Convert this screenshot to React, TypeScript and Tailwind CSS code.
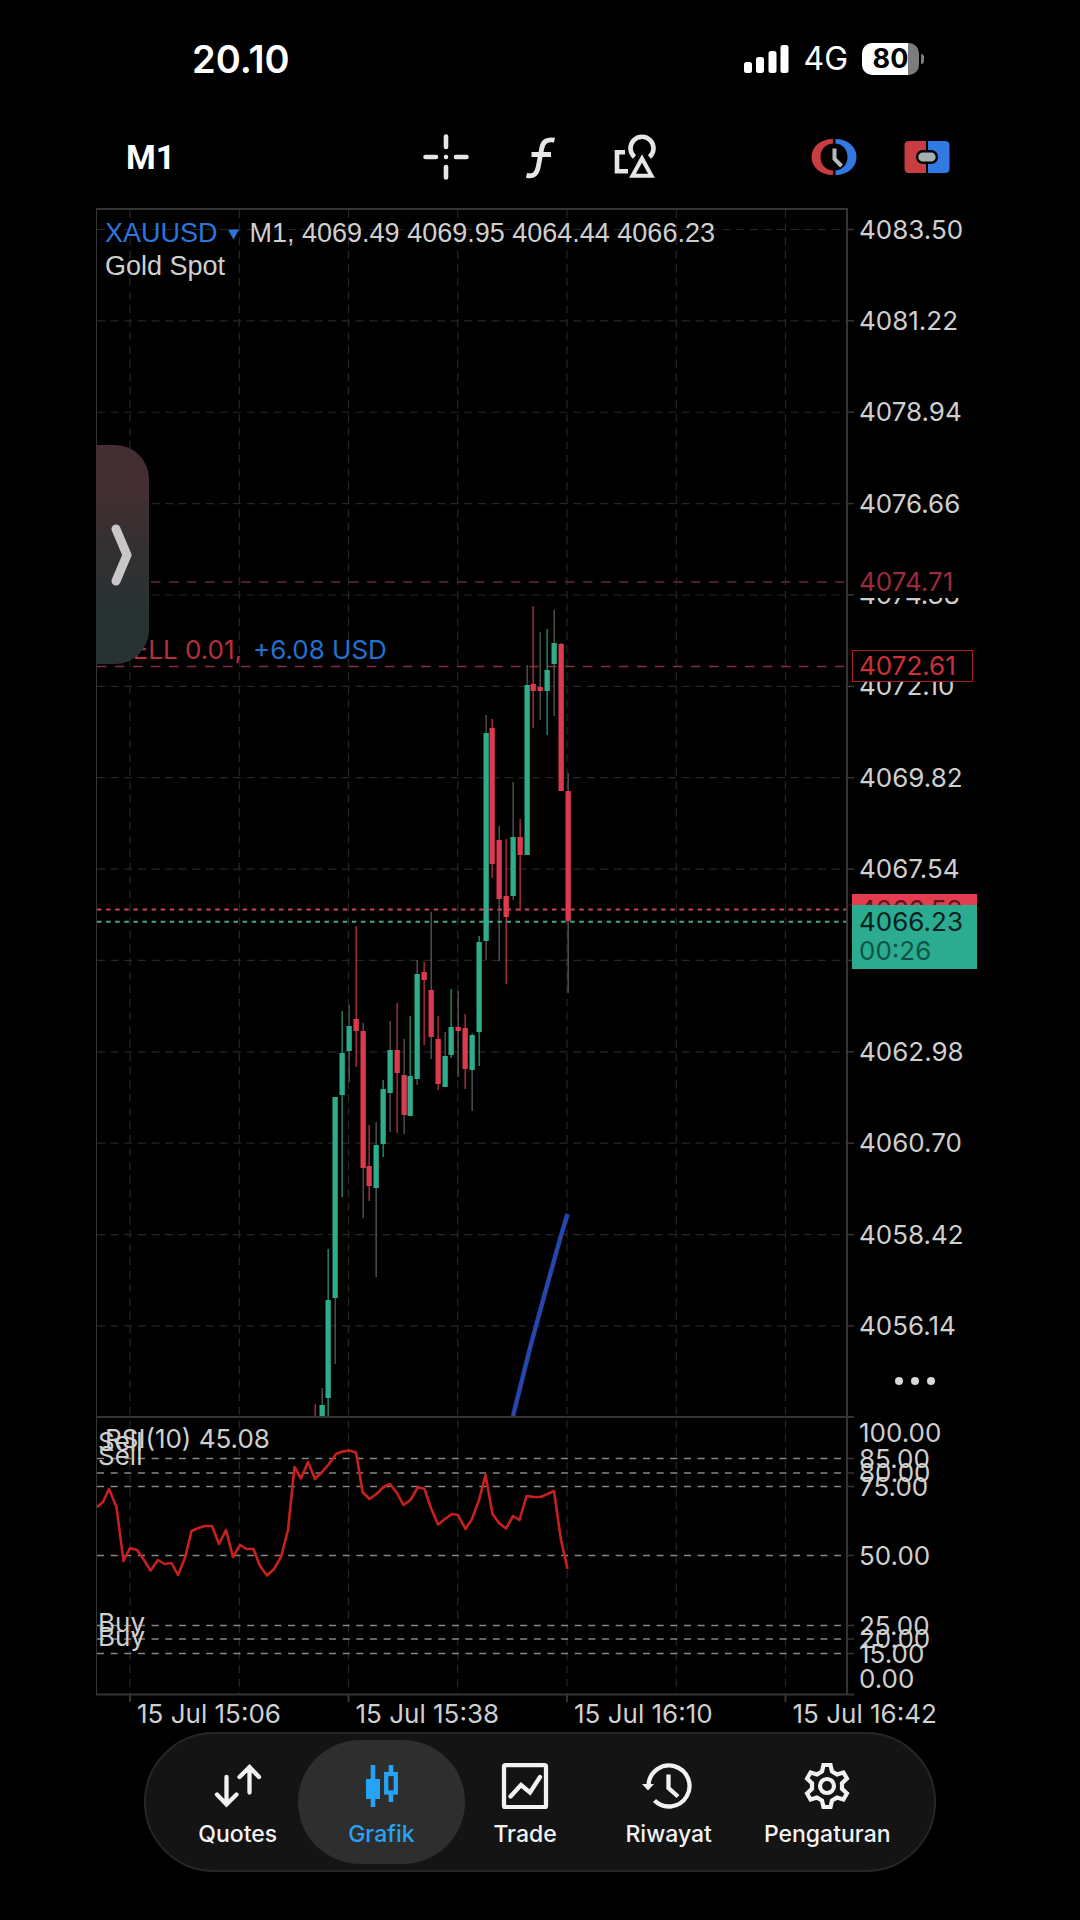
import React from 'react';
import clsx from 'clsx';

const BAR_STEP = 6.83;
const LAST_BAR_X = 567.5;

const GREEN = '#2ead8c';
const RED = '#de3a4e';

const priceLevels = [
  '4083.50', '4081.22', '4078.94', '4076.66', '4074.38', '4072.10', '4069.82',
  '4067.54', '4065.26', '4062.98', '4060.70', '4058.42', '4056.14',
].map((label, i) => ({ label, y: 229.5 + i * 91.37 }));

const verticalLines = [130, 239.3, 348.5, 457.7, 567, 676.3, 785.5];

const timeLabels = [
  { label: '15 Jul 15:06', x: 130 },
  { label: '15 Jul 15:38', x: 348.5 },
  { label: '15 Jul 16:10', x: 567 },
  { label: '15 Jul 16:42', x: 785.5 },
];

const rsiLevels = [
  { label: '85.00', y: 1458.5 },
  { label: '80.00', y: 1473 },
  { label: '75.00', y: 1486.5 },
  { label: '50.00', y: 1555.5 },
  { label: '25.00', y: 1625.5 },
  { label: '20.00', y: 1639 },
  { label: '15.00', y: 1653.5 },
];

// [high, body top, body bottom, low, up], oldest bar first
const candles: [number, number, number, number, boolean][] = [
  [1404, 1417, 1417, 1417, false],
  [1388, 1405, 1417, 1417, true],
  [1249, 1300, 1398, 1417, true],
  [1097, 1097, 1298, 1364, true],
  [1011, 1053, 1095, 1197, true],
  [1005, 1026, 1051, 1082, true],
  [926, 1019, 1031, 1067, false],
  [1023, 1031, 1168, 1218, false],
  [1125, 1166, 1186, 1201, false],
  [1122, 1145, 1188, 1277, true],
  [1080, 1089, 1144, 1157, true],
  [1021, 1050, 1093, 1132, true],
  [1003, 1050, 1073, 1133, false],
  [1039, 1075, 1115, 1134, false],
  [1016, 1076, 1116, 1116, true],
  [960, 974, 1079, 1085, true],
  [962, 972, 980, 1045, false],
  [912, 990, 1037, 1059, false],
  [1016, 1039, 1084, 1090, false],
  [1032, 1056, 1087, 1087, true],
  [989, 1027, 1055, 1058, true],
  [991, 1027, 1031, 1077, false],
  [1014, 1028, 1069, 1089, false],
  [1033, 1035, 1070, 1111, true],
  [936, 942, 1032, 1066, true],
  [715, 733, 941, 960, true],
  [719, 728, 864, 878, false],
  [826, 840, 899, 961, false],
  [839, 896, 917, 984, false],
  [782, 837, 896, 900, true],
  [819, 837, 855, 911, false],
  [665, 685, 855, 855, true],
  [606, 684, 691, 728, false],
  [632, 687, 691, 720, false],
  [629, 670, 691, 735, true],
  [610, 643, 664, 716, true],
  [643, 644, 791, 791, false],
  [773, 791, 921, 993, false],
];

const rsiLine =
  '97,1507 103,1502 109,1489 116.5,1507 123.5,1561 130,1548 137,1550 144,1560 150.5,1570.5 158,1560 164.5,1564 171.5,1563 178,1575 185,1558 191.5,1531 198.5,1528 205,1526 212,1526 219,1544 226,1530 233,1557 240,1545 246.5,1549 253.5,1549 260,1566 267,1575.5 274,1569 281,1557 288,1530 294.5,1467 301,1478.5 308,1462 315,1479 322,1472 329,1464 336,1454 342.5,1451.5 349.5,1450.5 356,1452.5 359,1470 362.5,1492 369.5,1499 376.5,1494 383.5,1487 390,1484 397,1493 403.5,1505 410.5,1500 418,1487 424.5,1489 431,1508 438,1524.5 445,1519 452,1514 458,1515 465.5,1529 472,1519 479,1500 485.5,1475 492.5,1514 499,1523 506,1528.5 513,1516 519.5,1520 526.5,1496 533.5,1497 540.5,1497 547.5,1494 554,1491 561,1540 567.5,1569';

const Chart: React.FC = () => (
  <svg
    viewBox="96 208 888 1524"
    className="block h-auto w-full font-['Inter',sans-serif] text-[26px]"
    role="img"
    aria-label="XAUUSD M1"
  >
    {/* grid */}
    <g stroke="#262626" strokeWidth="1.2" strokeDasharray="8 5.6">
      {verticalLines.map((x) => (
        <path key={x} d={`M${x} 210V1694`} />
      ))}
      {priceLevels.map(({ y }) => (
        <path key={y} d={`M97 ${y}H846`} />
      ))}
    </g>

    {/* order and stop levels */}
    <g stroke="#82303b" strokeWidth="1.3" strokeDasharray="9.5 8.5">
      <path d="M97 582H846" stroke="#65282f" />
      <path d="M97 666.5H846" />
    </g>
    <text x="242" y="659" textAnchor="end" fill="#b5303d">SELL 0.01,</text>
    <text x="253" y="659" fill="#2272d0">+6.08 USD</text>

    {/* candles */}
    {candles.map(([high, top, bottom, low, up], i) => {
      const fromLast = candles.length - 1 - i;
      const x = Math.round(LAST_BAR_X - fromLast * BAR_STEP);
      const color = up ? GREEN : RED;
      return (
        <g key={i}>
          <rect
            x={x - 0.5}
            y={high}
            width="1.3"
            height={low - high}
            fill={fromLast % 2 === 0 ? '#6b6969' : color}
            opacity="0.85"
          />
          <rect x={x - 2.5} y={top} width="5.3" height={bottom - top} fill={color} />
        </g>
      );
    })}

    {/* bid and ask */}
    <g strokeWidth="2" strokeDasharray="4.5 4.6">
      <path d="M97 909.5H846" stroke="#c8455a" />
      <path d="M97 921.8H846" stroke="#45a88c" />
    </g>

    {/* moving average */}
    <g fill="none">
      <path d="M513 1416 530 1348 545 1293 560 1239 567.5 1214" stroke="#1d48b4" strokeWidth="4.5" />
      <path
        d="M513 1416 530 1348 545 1293 560 1239 567.5 1214"
        stroke="#6b3578"
        strokeWidth="1.2"
        strokeDasharray="6 8"
      />
    </g>

    {/* RSI */}
    <g stroke="#868686" strokeWidth="1.3" strokeDasharray="7 6.65">
      {rsiLevels.map(({ y }) => (
        <path key={y} d={`M97 ${y}H841`} />
      ))}
    </g>
    <polyline points={rsiLine} fill="none" stroke="#c8201c" strokeWidth="2.6" strokeLinejoin="round" />
    <g fill="#cfcfcf">
      <text x="105" y="1448">RSI(10) 45.08</text>
      <text x="98" y="1451">Sell</text>
      <text x="98" y="1465">Sell</text>
      <text x="98" y="1632">Buy</text>
      <text x="98" y="1646">Buy</text>
    </g>

    {/* frame */}
    <g stroke="#343434" strokeWidth="2">
      <path d="M96.5 209V1694" strokeWidth="1" />
      <path d="M96 209H848" />
      <path d="M847 209V1695" />
      <path d="M96 1417H854" />
      <path d="M96 1694.5H854" />
      {priceLevels.map(({ y }) => (
        <path key={y} d={`M848 ${y}H854`} strokeWidth="1.5" />
      ))}
      {rsiLevels.map(({ y }) => (
        <path key={y} d={`M848 ${y}H854`} strokeWidth="1.5" />
      ))}
      {timeLabels.map(({ x }) => (
        <path key={x} d={`M${x} 1695V1702`} />
      ))}
    </g>

    {/* scales */}
    <g fill="#cfcfcf">
      {priceLevels.map(({ label, y }) => (
        <text key={label} x="859" y={y + 9}>{label}</text>
      ))}
      <text x="859" y="1442">100.00</text>
      {rsiLevels.map(({ label, y }) => (
        <text key={label} x="859" y={y + 9}>{label}</text>
      ))}
      <text x="859" y="1688">0.00</text>
      {timeLabels.map(({ label, x }) => (
        <text key={label} x={x + 7} y="1723">{label}</text>
      ))}
    </g>

    {/* price tags */}
    <rect x="855" y="566" width="122" height="32" fill="#000" />
    <text x="859" y="591" fill="#9c2a3c">4074.71</text>
    <rect x="852.5" y="650.5" width="120" height="31" fill="#000" stroke="#a3202a" />
    <text x="859" y="675" fill="#cf3038">4072.61</text>
    <rect x="852" y="894" width="125" height="30" fill="#e53d50" />
    <text x="859" y="919" fill="#5a1620">4066.53</text>
    <rect x="852" y="905" width="125" height="64" fill="#2bab8f" />
    <text x="859" y="931" fill="#06221c">4066.23</text>
    <text x="859" y="960" fill="#0c5546">00:26</text>
  </svg>
);

const StatusBar: React.FC = () => (
  <div className="flex h-[82px] items-center justify-between pt-9 pr-[156px] pl-[192px]">
    <span className="text-[38px] font-semibold">20.10</span>
    <div className="flex items-center gap-[14px]">
      <svg width="45" height="28" viewBox="0 0 45 28" fill="#fff">
        <rect x="0" y="17" width="8" height="11" rx="2.5" />
        <rect x="12" y="12" width="8" height="16" rx="2.5" />
        <rect x="24.5" y="6" width="8" height="22" rx="2.5" />
        <rect x="36.5" y="0" width="8" height="28" rx="2.5" />
      </svg>
      <span className="text-[32px]">4G</span>
      <div className="flex items-center gap-[2px]">
        <div className="flex h-8 w-[57px] items-center justify-center rounded-[10px] bg-[linear-gradient(90deg,#fff_0_46px,#7c7c7c_46px)] text-[27px] font-bold text-black">
          80
        </div>
        <div className="h-[10px] w-[3px] rounded-r-full bg-[#7c7c7c]" />
      </div>
    </div>
  </div>
);

const Toolbar: React.FC = () => (
  <div className="flex h-[126px] items-center pt-6 pr-[130px] pl-[126px]">
    <div className="flex-1">
      <button className="font-['Roboto',sans-serif] text-[34px] font-bold">M1</button>
    </div>
    <div className="flex gap-12">
      <button aria-label="Crosshair">
        <svg width="46" height="46" viewBox="0 0 46 46" stroke="#e6e6e6" strokeWidth="4.6" strokeLinecap="round">
          <path d="M23 2.5V13M23 33V43.5M2.5 23H13M33 23H43.5M23 23h.01" />
        </svg>
      </button>
      <button aria-label="Indicators">
        <svg width="46" height="46" viewBox="0 0 46 46" fill="none" stroke="#e6e6e6" strokeWidth="4.8">
          <path d="M37.5 6.2C30 4.8 26 7.500 24.800 14L21.300 32.500C19.800 40 16.500 43 9.500 41.300M14.500 20.500H34" />
        </svg>
      </button>
      <button aria-label="Objects">
        <svg width="46" height="46" viewBox="0 0 46 46" fill="none" stroke="#e6e6e6" strokeWidth="4.6">
          <path d="M14 18.3H6V37.3H17" />
          <path d="M23.500 23A11.500 11.500 0 1 1 38.500 23" />
          <path d="M31 24.500 21.500 41.700H40.500Z" strokeWidth="4" />
        </svg>
      </button>
    </div>
    <div className="ml-[154px] flex gap-[47px]">
      <button aria-label="Trading sessions">
        <svg width="46" height="46" viewBox="0 0 46 46" fill="none">
          <path d="M22 5C9 5 .5 13 .5 23S9 41 22 41V36.5C14 36 9.500 30 9.500 23S14 10 22 9.500Z" fill="#c83d42" />
          <path d="M24.500 5C37 5 45.500 13 45.500 23S37 41 24.500 41V36.500C32 36 36.500 30 36.500 23S32 10 24.500 9.500Z" fill="#3279e4" />
          <path d="M23.500 14.500V25L30.500 32" stroke="#b9b9bd" strokeWidth="4" />
        </svg>
      </button>
      <button aria-label="One click trading">
        <svg width="46" height="46" viewBox="0 0 46 46">
          <path d="M5 7H22V39H5Q.5 39 .5 34.500V11.500Q.5 7 5 7Z" fill="#c83d42" />
          <path d="M24 7H41Q45.500 7 45.500 11.500V34.500Q45.500 39 41 39H24Z" fill="#3279e4" />
          <rect x="13.200" y="17.200" width="19.600" height="11.600" rx="5.500" fill="#a3b1b2" stroke="#000" strokeWidth="2.400" />
        </svg>
      </button>
    </div>
  </div>
);

const tabs = [
  {
    label: 'Quotes',
    icon: (
      <path d="M15.500 14V40M6 31.500 15.500 41.500 25.500 31.500M38.500 29.500V4M28.500 14 38.500 4 48 14" strokeLinecap="round" />
    ),
  },
  {
    label: 'Grafik',
    icon: (
      <>
        <path d="M19 2V44" strokeWidth="4.6" />
        <rect x="12" y="16" width="14" height="20" fill="currentColor" stroke="none" />
        <path d="M37 2V10M37 31V39" strokeWidth="4.6" />
        <rect x="32.2" y="11" width="9.6" height="18.5" />
      </>
    ),
  },
  {
    label: 'Trade',
    icon: (
      <>
        <rect x="6" y="2.2" width="42" height="42" rx="1.5" />
        <path d="M12.500 33.500 23 22 32 29.500 42 14" strokeLinecap="round" />
      </>
    ),
  },
  {
    label: 'Riwayat',
    icon: (
      <>
        <path d="M6.500 22A20.500 20.500 0 1 1 12.500 37.500" />
        <path d="M0 21H12L6 27.500Z" fill="currentColor" stroke="none" />
        <path d="M26.500 11.500V25L36 33.500" />
      </>
    ),
  },
  {
    label: 'Pengaturan',
    icon: (
      <g transform="translate(27 23)" strokeWidth="4.2">
        <path d="M-3.500-21H3.500L5-14.500 10-11.600 16.400-13.500 19.900-7.500 15-2.900V2.900L19.900 7.500 16.400 13.500 10 11.600 5 14.500 3.500 21H-3.500L-5 14.500-10 11.600-16.400 13.500-19.900 7.500-15 2.900V-2.900L-19.900-7.500-16.400-13.500-10-11.600-5-14.500Z" />
        <circle r="7" />
      </g>
    ),
  },
];

const TabBar: React.FC = () => (
  <nav className="mx-[144px] grid grid-cols-[144fr_144fr_144fr_144fr_174fr] rounded-full border-2 border-[#262626] bg-[#141414] py-[6px] pr-[20px] pl-[20px]">
    {tabs.map(({ label, icon }) => (
      <button
        key={label}
        className={clsx(
          'flex flex-col items-center gap-[11px] rounded-full pt-[23px] pb-4',
          label === 'Grafik' ? '-mx-3 bg-[#2e2e2e] text-[#27a3f5]' : 'text-[#f2f2f2]'
        )}
      >
        <svg width="54" height="46" viewBox="0 0 54 46" fill="none" stroke="currentColor" strokeWidth="4.3">
          {icon}
        </svg>
        <span className="text-[23px] leading-7 font-medium">{label}</span>
      </button>
    ))}
  </nav>
);

const App: React.FC = () => (
  <div className="min-h-screen bg-black font-['Inter',sans-serif] text-white">
    <StatusBar />
    <Toolbar />
    <main className="relative mx-[96px]">
      <Chart />
      <div className="absolute top-[9px] left-[9px] font-['Liberation_Sans',Arial,sans-serif] text-[27px] leading-[33px] text-[#cfcfcf]">
        <div className="flex items-center">
          <button className="flex items-center gap-[10px] text-[#2b76dc]">
            XAUUSD
            <svg width="11" height="12" viewBox="0 0 12 12" fill="currentColor">
              <path d="M0 1H12L6 12Z" />
            </svg>
          </button>
          <span className="ml-[11px]">M1, 4069.49 4069.95 4064.44 4066.23</span>
        </div>
        <div>Gold Spot</div>
      </div>
      <button
        aria-label="Open panel"
        className="absolute top-[237px] left-0 flex h-[219px] w-[53px] items-center justify-center rounded-r-[34px] bg-linear-to-b from-[#432f31] from-20% via-[#323031] via-50% to-[#293233] to-75%"
      >
        <svg width="24" height="64" viewBox="0 0 24 64" fill="none" stroke="#c9c6c9" strokeWidth="9" strokeLinecap="round" strokeLinejoin="round">
          <path d="M5 6 16 32 5 58" />
        </svg>
      </button>
      <button aria-label="More" className="absolute top-[1165px] right-[45px] flex gap-2 p-1">
        <span className="size-2 rounded-full bg-[#d8d8d8]" />
        <span className="size-2 rounded-full bg-[#d8d8d8]" />
        <span className="size-2 rounded-full bg-[#d8d8d8]" />
      </button>
    </main>
    <TabBar />
  </div>
);

export default App;
